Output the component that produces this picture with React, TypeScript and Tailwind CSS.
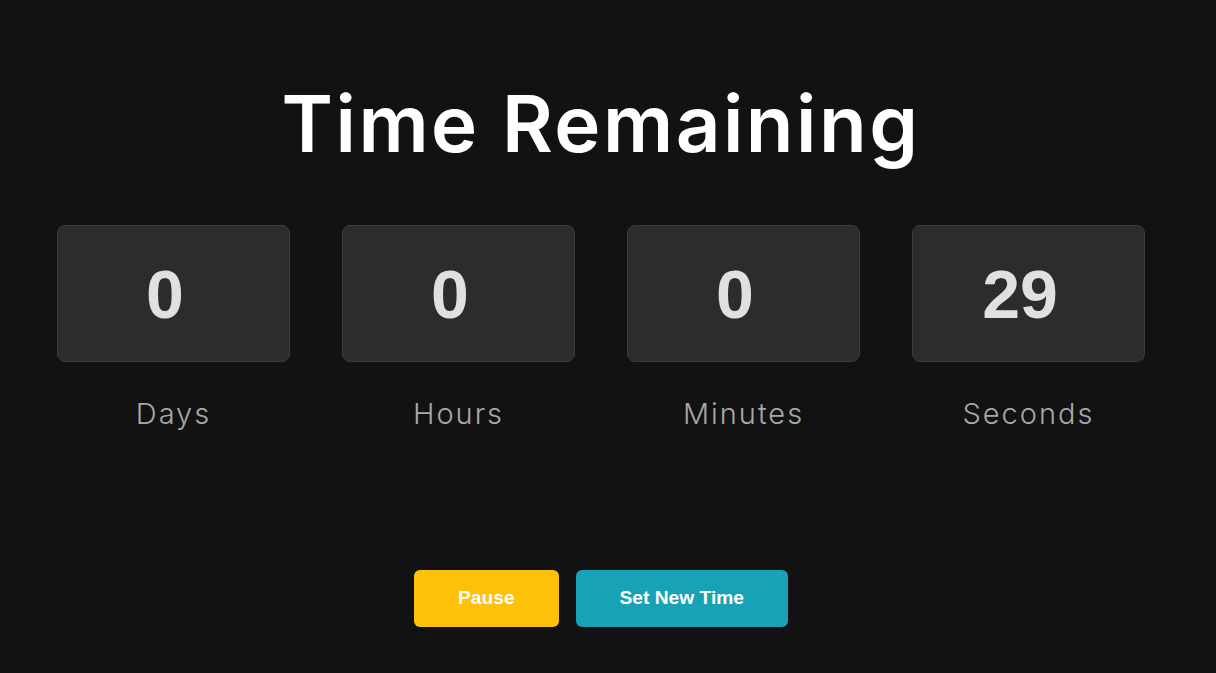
import React from 'react';

const units = [
  { label: 'Days', value: 0 },
  { label: 'Hours', value: 0 },
  { label: 'Minutes', value: 0 },
  { label: 'Seconds', value: 29 },
];

const App: React.FC = () => {
  return (
    <div className="min-h-screen w-full bg-[#121212]">
      <div className="w-[1202px] flex flex-col items-center pt-[85px]">
        <h1 className="font-['Inter',sans-serif] font-semibold text-[78px] leading-none text-white tracking-[2.5px]">
          Time Remaining
        </h1>

        <div className="mt-[62px] flex gap-[52px]">
          {units.map((u) => (
            <div key={u.label} className="flex flex-col items-center">
              <div className="w-[233px] h-[137px] rounded-[8px] bg-[#2c2c2c] border border-[#3b3b3b] flex items-center justify-center pr-[17px]">
                <span className="font-['Liberation_Sans',Arial,sans-serif] font-bold text-[68px] leading-none text-[#e0e0e0]">
                  {u.value}
                </span>
              </div>
              <div className="mt-[37px] font-['Inter',sans-serif] font-light text-[29px] leading-none text-[#a8a8a8] tracking-[2px]">
                {u.label}
              </div>
            </div>
          ))}
        </div>

        <div className="mt-[142px] flex gap-[17px]">
          <button className="h-[57px] px-[44px] rounded-[6px] bg-[#ffc107] text-white font-['Liberation_Sans',Arial,sans-serif] font-bold text-[19.2px]">
            Pause
          </button>
          <button className="h-[57px] px-[44px] rounded-[6px] bg-[#17a2b8] text-white font-['Liberation_Sans',Arial,sans-serif] font-bold text-[19.2px]">
            Set New Time
          </button>
        </div>
      </div>
    </div>
  );
};

export default App;
